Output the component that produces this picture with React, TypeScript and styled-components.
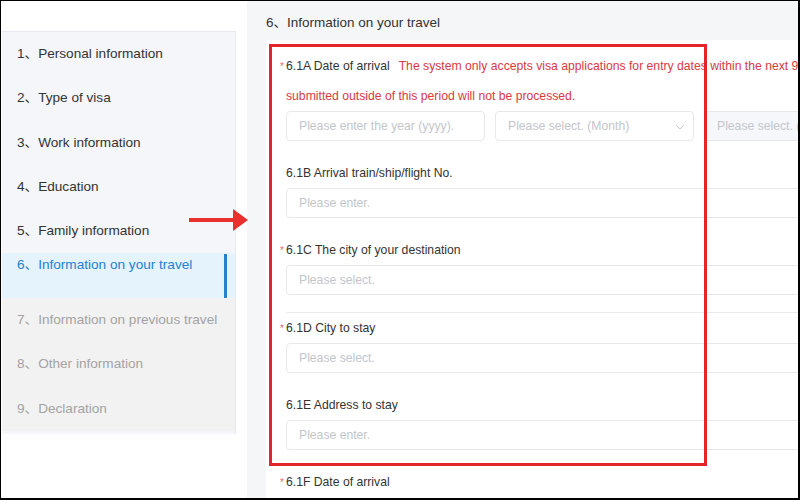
import React from "react";
import styled, { createGlobalStyle } from "styled-components";

const Global = createGlobalStyle`
  html, body { margin: 0; padding: 0; background: #fff; }
  body { font-family: "Liberation Sans", Arial, "Noto Sans CJK SC", sans-serif; }
  * { box-sizing: border-box; }
`;

const Frame = styled.div`
  position: relative;
  width: 800px;
  height: 500px;
  border-style: solid;
  border-color: #000;
  border-width: 1px 2px 2px 1px;
  display: flex;
  overflow: hidden;
  background: #fff;
`;

const LeftPane = styled.aside`
  width: 246px;
  flex: none;
  background: #fff;
  padding: 30px 0 0 1px;
`;

const Sidebar = styled.nav`
  width: 234px;
  background: #f4f6f9;
  border-top: 1px solid #e6e9ee;
  border-right: 1px solid #e6e9ee;
  padding-bottom: 3px;
`;

type NavState = "done" | "active" | "todo";

const NavItem = styled.div<{ $state: NavState }>`
  position: relative;
  height: 44.3px;
  display: flex;
  align-items: ${(p) => (p.$state === "active" ? "flex-start" : "center")};
  padding: ${(p) => (p.$state === "active" ? "2px 0 0 15px" : "0 0 0 15px")};
  font-size: 13.6px;
  line-height: 20px;
  white-space: nowrap;
  color: ${(p) =>
    p.$state === "active" ? "#2481d2" : p.$state === "todo" ? "#a3a3a3" : "#333"};
  background: ${(p) =>
    p.$state === "active" ? "#e5f3fd" : p.$state === "todo" ? "#f2f2f2" : "transparent"};

  ${(p) =>
    p.$state === "active" &&
    `
    &::after {
      content: "";
      position: absolute;
      right: 8px;
      top: 1px;
      bottom: 0;
      width: 3px;
      background: #2a7fc9;
    }
  `}
`;

const RightPane = styled.main`
  flex: 1;
  min-width: 0;
  background: #f5f6f8;
  padding-left: 19px;
  display: flex;
  flex-direction: column;
`;

const Title = styled.h2`
  margin: 0;
  height: 39px;
  line-height: 43px;
  font-size: 13.5px;
  font-weight: normal;
  color: #333;
  white-space: nowrap;
`;

const Card = styled.section`
  flex: 1;
  width: 700px;
  background: #fff;
  padding: 11px 0 0 20px;
`;

const FormItem = styled.div`
  margin-bottom: 17px;
`;

const Label = styled.div`
  font-size: 12.2px;
  line-height: 30px;
  height: 30px;
  color: #333;
  white-space: nowrap;
`;

const Required = styled.span`
  display: inline-block;
  width: 6px;
  margin-left: -6px;
  margin-top: 2px;
  color: #e86a6f;
  font-size: 10px;
  vertical-align: top;
  line-height: 28px;
`;

const Note = styled.span`
  color: #d93a42;
  margin-left: 9px;
`;

const NoteLine = styled.div`
  font-size: 12.2px;
  line-height: 30px;
  color: #d93a42;
  white-space: nowrap;
`;

const InputRow = styled.div`
  display: flex;
  gap: 10px;
`;

const Field = styled.input<{ $width?: number; $disabled?: boolean }>`
  display: block;
  height: 30px;
  width: ${(p) => (p.$width ? `${p.$width}px` : "620px")};
  flex: none;
  border: 1px solid #e6e8ec;
  border-radius: 4px;
  padding: 0 12px;
  font-family: inherit;
  font-size: 12.2px;
  color: #333;
  background: ${(p) => (p.$disabled ? "#f5f7fa" : "#fff")};
  outline: none;
  &::placeholder {
    color: #c3c6cc;
  }
`;

const SelectBox = styled.div`
  position: relative;
  flex: none;
`;

const Chevron = styled.svg`
  position: absolute;
  right: 8px;
  top: 10px;
`;

const Divider = styled.div`
  height: 1px;
  width: 620px;
  background: #e8eaee;
  margin-top: 1px;
`;

const Highlight = styled.div`
  position: absolute;
  left: 268px;
  top: 43px;
  width: 438px;
  height: 422px;
  border: 3px solid #e3252b;
  pointer-events: none;
`;

const Arrow = styled.svg`
  position: absolute;
  left: 188px;
  top: 207px;
`;

const navItems: { label: string; state: NavState }[] = [
  { label: "1、Personal information", state: "done" },
  { label: "2、Type of visa", state: "done" },
  { label: "3、Work information", state: "done" },
  { label: "4、Education", state: "done" },
  { label: "5、Family information", state: "done" },
  { label: "6、Information on your travel", state: "active" },
  { label: "7、Information on previous travel", state: "todo" },
  { label: "8、Other information", state: "todo" },
  { label: "9、Declaration", state: "todo" },
];

const Select = ({ placeholder, width, disabled }: { placeholder: string; width: number; disabled?: boolean }) => (
  <SelectBox>
    <Field readOnly placeholder={placeholder} $width={width} $disabled={disabled} />
    <Chevron width="12" height="12" viewBox="0 0 12 12" fill="none">
      <path d="M2.5 4.5 L6 8 L9.5 4.5" stroke="#c0c4cc" strokeWidth="1" />
    </Chevron>
  </SelectBox>
);

export default function App() {
  return (
    <>
      <Global />
      <Frame>
        <LeftPane>
          <Sidebar>
            {navItems.map((n) => (
              <NavItem key={n.label} $state={n.state}>
                {n.label}
              </NavItem>
            ))}
          </Sidebar>
        </LeftPane>
        <RightPane>
          <Title>6、Information on your travel</Title>
          <Card>
            <FormItem>
              <Label>
                <Required>*</Required>6.1A Date of arrival
                <Note>
                  The system only accepts visa applications for entry dates within the next 90 days. Applications
                </Note>
              </Label>
              <NoteLine>submitted outside of this period will not be processed.</NoteLine>
              <InputRow>
                <Field readOnly placeholder="Please enter the year (yyyy)." $width={199} />
                <Select placeholder="Please select. (Month)" width={199} />
                <Select placeholder="Please select. (Day)" width={199} disabled />
              </InputRow>
            </FormItem>
            <FormItem>
              <Label>6.1B Arrival train/ship/flight No.</Label>
              <Field readOnly placeholder="Please enter." />
            </FormItem>
            <FormItem>
              <Label>
                <Required>*</Required>6.1C The city of your destination
              </Label>
              <Field readOnly placeholder="Please select." />
            </FormItem>
            <Divider />
            <FormItem>
              <Label>
                <Required>*</Required>6.1D City to stay
              </Label>
              <Field readOnly placeholder="Please select." />
            </FormItem>
            <FormItem>
              <Label>6.1E Address to stay</Label>
              <Field readOnly placeholder="Please enter." />
            </FormItem>
            <FormItem>
              <Label>
                <Required>*</Required>6.1F Date of arrival
              </Label>
            </FormItem>
          </Card>
        </RightPane>
        <Highlight />
        <Arrow width="60" height="24" viewBox="0 0 60 24">
          <rect x="0" y="10" width="46" height="4" fill="#e8302f" />
          <polygon points="44,1 59,12 44,23" fill="#e8302f" />
        </Arrow>
      </Frame>
    </>
  );
}
